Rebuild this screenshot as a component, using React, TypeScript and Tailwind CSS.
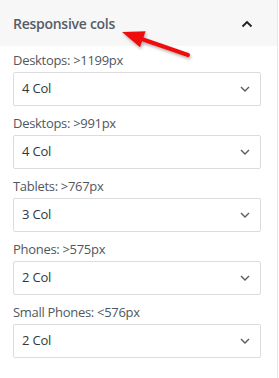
import React from 'react'

const rows = [
  { label: 'Desktops: >1199px', value: '4 Col' },
  { label: 'Desktops: >991px', value: '4 Col' },
  { label: 'Tablets: >767px', value: '3 Col' },
  { label: 'Phones: >575px', value: '2 Col' },
  { label: 'Small Phones: <576px', value: '2 Col' },
]

const App = () => {
  return (
    <div className="w-[279px] h-[378px] bg-white flex font-['Open_Sans',sans-serif]">
      <div className="w-[277px] h-full relative">
        <div className="h-[46px] bg-[#f7f7f7] flex items-center justify-between pl-[13px] pr-[24px]">
          <span className="text-[14px] font-semibold tracking-[-0.27px] text-[#555d66]">Responsive cols</span>
          <svg width="12" height="8" viewBox="0 0 12 8" className="mt-[1px]">
            <path d="M1.5 6.5 L6 2 L10.5 6.5" fill="none" stroke="#1e1e1e" strokeWidth="1.8" />
          </svg>
        </div>
        <div className="pl-[13px] pr-[16px] pt-[5px] flex flex-col gap-[8px]">
          {rows.map((r) => (
            <div key={r.label} className="flex flex-col">
              <label className="text-[13px] leading-[19px] tracking-[-0.3px] text-[#50575e] mb-[2px]">{r.label}</label>
              <div className="h-[34px] w-[248px] border border-[#dcdcde] rounded-[2px] flex items-center justify-between pl-[8px] pr-[10px]">
                <span className="text-[13px] tracking-[-0.2px] text-[#32373c]">{r.value}</span>
                <svg width="10" height="6" viewBox="0 0 10 6">
                  <path d="M1 1 L5 5 L9 1" fill="none" stroke="#555d66" strokeWidth="1.4" />
                </svg>
              </div>
            </div>
          ))}
        </div>
        <svg className="absolute left-[116px] top-[26px]" width="90" height="40" viewBox="0 0 90 40">
          <defs>
            <filter id="sh" x="-10%" y="-30%" width="140%" height="180%">
              <feDropShadow dx="1" dy="2" stdDeviation="1.5" floodColor="#000" floodOpacity="0.3" />
            </filter>
          </defs>
          <g filter="url(#sh)">
            <line x1="72" y1="29" x2="20" y2="11" stroke="#ee1111" strokeWidth="4" strokeLinecap="round" />
            <polygon points="6,6 29.6,5.2 24,21.2" fill="#ee1111" />
          </g>
        </svg>
      </div>
      <div className="w-[1px] h-full bg-[#e6e6e6]" />
    </div>
  )
}

export default App
